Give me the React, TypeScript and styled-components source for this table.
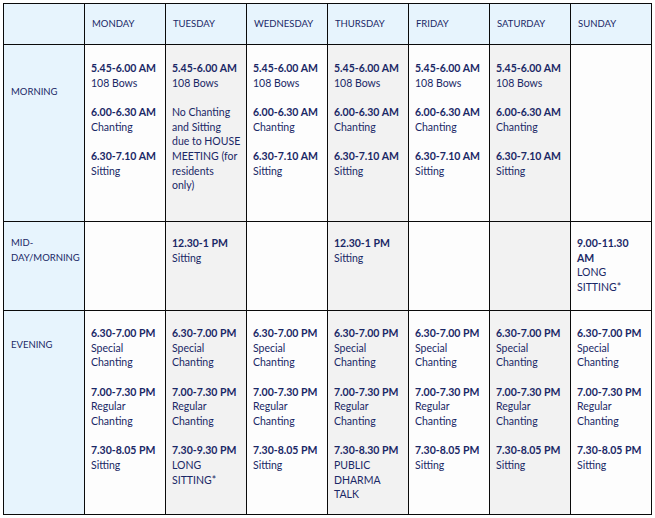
import React from "react";
import styled, { createGlobalStyle } from "styled-components";

// =============================================================================
// DATA
// =============================================================================
type Entry = { time: string; desc: string };

const DAYS = [
    "MONDAY",
    "TUESDAY",
    "WEDNESDAY",
    "THURSDAY",
    "FRIDAY",
    "SATURDAY",
    "SUNDAY",
];

const MORNING: Entry[] = [
    { time: "5.45-6.00 AM", desc: "108 Bows" },
    { time: "6.00-6.30 AM", desc: "Chanting" },
    { time: "6.30-7.10 AM", desc: "Sitting" },
];

const EVENING: Entry[] = [
    { time: "6.30-7.00 PM", desc: "Special\nChanting" },
    { time: "7.00-7.30 PM", desc: "Regular\nChanting" },
    { time: "7.30-8.05 PM", desc: "Sitting" },
];

const withLast = (last: Entry): Entry[] => [...EVENING.slice(0, 2), last];

interface Row {
    label: string;
    labelTop: number;
    bodyTop: number;
    cells: Entry[][];
}

const ROWS: Row[] = [
    {
        label: "MORNING",
        labelTop: 40,
        bodyTop: 16,
        cells: [
            MORNING,
            [
                MORNING[0],
                {
                    time: "",
                    desc: "No Chanting\nand Sitting\ndue to HOUSE\nMEETING (for\nresidents\nonly)",
                },
            ],
            MORNING,
            MORNING,
            MORNING,
            MORNING,
            [],
        ],
    },
    {
        label: "MID-\nDAY/MORNING",
        labelTop: 14,
        bodyTop: 14,
        cells: [
            [],
            [{ time: "12.30-1 PM", desc: "Sitting" }],
            [],
            [{ time: "12.30-1 PM", desc: "Sitting" }],
            [],
            [],
            [{ time: "9.00-11.30\nAM", desc: "LONG\nSITTING*" }],
        ],
    },
    {
        label: "EVENING",
        labelTop: 27,
        bodyTop: 15,
        cells: [
            EVENING,
            withLast({ time: "7.30-9.30 PM", desc: "LONG\nSITTING*" }),
            EVENING,
            withLast({ time: "7.30-8.30 PM", desc: "PUBLIC\nDHARMA\nTALK" }),
            EVENING,
            EVENING,
            EVENING,
        ],
    },
];

// =============================================================================
// STYLES
// =============================================================================
const GlobalStyle = createGlobalStyle`
    html, body {
        margin: 0;
        padding: 0;
        background: #ffffff;
    }
    body {
        padding: 3px;
        font-family: Lato, "Open Sans", sans-serif;
        color: #1a2866;
    }
`;

const Grid = styled.div`
    display: grid;
    grid-template-columns: repeat(8, 80px);
    grid-template-rows: 40px 176px 88px 203px;
    gap: 1px;
    padding: 1px;
    width: max-content;
    background: #0a0a0a;
`;

const HeadCell = styled.div`
    background: #e7f4fd;
    padding: 13px 4px 0 7px;
    font-size: 9.5px;
    line-height: 14.67px;
`;

const LabelCell = styled.div<{ $top: number }>`
    background: #e7f4fd;
    padding: ${(p) => p.$top}px 4px 0 7px;
    font-size: 9.5px;
    line-height: 14.67px;
    white-space: pre-line;
`;

const BodyCell = styled.div<{ $shaded: boolean; $top: number }>`
    background: ${(p) => (p.$shaded ? "#f2f2f2" : "#fdfdfd")};
    padding: ${(p) => p.$top}px 2px 0 6px;
    font-size: 10.5px;
    line-height: 14.67px;
`;

const Item = styled.div`
    margin-bottom: 14.67px;
`;

const Time = styled.div`
    font-weight: 700;
    letter-spacing: 0;
    white-space: pre-line;
`;

const Desc = styled.div`
    white-space: pre-line;
`;

// =============================================================================
// APP
// =============================================================================
export default function App() {
    return (
        <>
            <GlobalStyle />
            <Grid>
                <HeadCell />
                {DAYS.map((d) => (
                    <HeadCell key={d}>{d}</HeadCell>
                ))}
                {ROWS.map((row) => (
                    <React.Fragment key={row.label}>
                        <LabelCell $top={row.labelTop}>{row.label}</LabelCell>
                        {row.cells.map((entries, i) => (
                            <BodyCell
                                key={i}
                                $shaded={i % 2 === 1}
                                $top={row.bodyTop}
                            >
                                {entries.map((e, j) => (
                                    <Item key={j}>
                                        {e.time && <Time>{e.time}</Time>}
                                        <Desc>{e.desc}</Desc>
                                    </Item>
                                ))}
                            </BodyCell>
                        ))}
                    </React.Fragment>
                ))}
            </Grid>
        </>
    );
}
